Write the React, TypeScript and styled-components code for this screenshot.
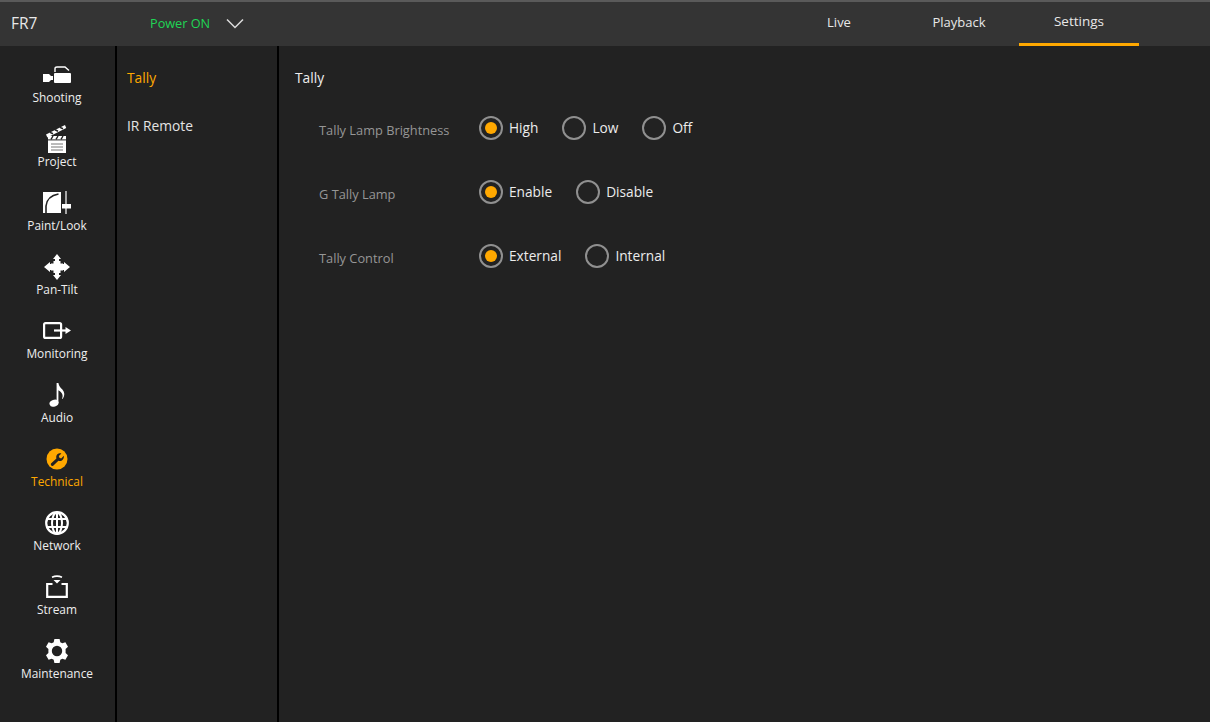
import React from 'react'
import styled, { createGlobalStyle } from 'styled-components'

const GlobalStyle = createGlobalStyle`
  html, body {
    margin: 0;
    padding: 0;
    height: 100%;
    background: #222222;
    font-family: "Open Sans", "Noto Sans", "Liberation Sans", sans-serif;
  }
  #root { height: 100%; }
  * { box-sizing: border-box; }
`

const ShootingIcon = () => (
  <svg width="28" height="17" viewBox="0 0 28 17" fill="#fff">
    <path d="M0 8h6l2 2h2v4H8l-2 2H0z" />
    <rect x="11" y="7" width="17" height="10" rx="1" />
    <path d="M12 6V2.500Q12 1 14 1h8l4 3.500" fill="none" stroke="#fff" strokeWidth="1.400" />
  </svg>
)

const ProjectIcon = () => (
  <svg width="24" height="30" viewBox="0 0 24 30" fill="#fff">
    <path d="M1 10.500 20 1l1.200 3L2.400 13.400z" />
    <path d="M5 8.400l3 1.400M10 5.800l3 1.400M15 3.400l3 1.400" stroke="#222" strokeWidth="1.600" />
    <rect x="3" y="12" width="18" height="3.400" />
    <path d="M3 16.400h18V29H3z" />
    <path d="M6 15.400l2-3.400M11 15.400l2-3.400M16 15.400l2-3.400" stroke="#222" strokeWidth="1.400" />
    <path d="M6 20h12M6 23h12M6 26h12" stroke="#777" strokeWidth="1" />
  </svg>
)

const PaintIcon = () => (
  <svg width="28" height="23" viewBox="0 0 28 23">
    <path d="M0 1h18v21H0z" fill="#fff" />
    <path d="M3 22V15Q4 5 15.500 3" fill="none" stroke="#222" strokeWidth="1.600" />
    <path d="M23 0v23" stroke="#fff" strokeWidth="1.200" />
    <rect x="19" y="13" width="9" height="4.500" fill="#fff" />
  </svg>
)

const PanTiltIcon = () => (
  <svg width="26" height="26" viewBox="0 0 26 26" fill="#fff">
    <path d="M13 0l4 5h-2v5h5V8l6 5-6 5v-2h-5v5h2l-4 5-4-5h2v-5H6v2l-6-5 6-5v2h5V5H9z" />
    <rect x="7" y="9.500" width="12" height="7" />
    <rect x="9.500" y="7" width="7" height="12" />
  </svg>
)

const MonitoringIcon = () => (
  <svg width="28" height="17" viewBox="0 0 28 17">
    <rect x="1.100" y="1.100" width="17" height="14.800" rx="1.500" fill="none" stroke="#fff" strokeWidth="2.200" />
    <path d="M11 8.500h12" stroke="#fff" strokeWidth="2.200" />
    <path d="M22.500 5 28 8.500 22.500 12z" fill="#fff" />
  </svg>
)

const AudioIcon = () => (
  <svg width="16" height="24" viewBox="0 0 16 24" fill="#fff">
    <ellipse cx="5" cy="20.200" rx="4.600" ry="3.400" transform="rotate(-18 5 20.200)" />
    <path d="M7.600 0h1.800c.4 3 2.200 4.600 4 6.600 2.400 2.800 2.600 5.800.4 9.200h-.8c1.200-3 .6-5-1.200-6.800-.8-.8-1.600-1.400-2.400-1.800V20H7.600z" />
  </svg>
)

const TechnicalIcon = () => (
  <svg width="22" height="22" viewBox="0 0 22 22">
    <circle cx="11" cy="11" r="10.500" fill="#ffa800" />
    <path d="M5 15.600 10.400 10.600c-.6-2 .2-4.200 2.200-5 1-.4 1.800-.4 2.800-.2L12.800 8l.6 1.800 1.800.6 2.600-2.600c.3 1.600-.2 3.400-1.600 4.400-1.200.9-2.600 1-3.800.6L7.200 17.800c-1.400.8-3-.8-2.200-2.200z" fill="#222" />
  </svg>
)

const NetworkIcon = () => (
  <svg width="24" height="24" viewBox="0 0 24 24" fill="none" stroke="#fff">
    <circle cx="12" cy="12" r="10.800" strokeWidth="2.200" />
    <ellipse cx="12" cy="12" rx="5" ry="10.600" strokeWidth="2" />
    <path d="M12 1v22M2 8h20M2 16h20" strokeWidth="2" />
  </svg>
)

const StreamIcon = () => (
  <svg width="22" height="23" viewBox="0 0 22 23" fill="none" stroke="#fff">
    <path d="M6.500 9H1.200v12.800h19.600V9h-5.300" strokeWidth="2.200" />
    <path d="M6 2.200Q11 0 16 2.200" strokeWidth="1.600" />
    <path d="M7.500 5h7L11 8.500z" fill="#fff" stroke="none" />
  </svg>
)

const MaintenanceIcon = () => (
  <svg width="24" height="24" viewBox="0 0 24 24" fill="#fff">
    <path fillRule="evenodd" d="M9.400 0h5.200l.7 3.200 2 1.100 3.100-1 2.600 4.500-2.400 2.200v4l2.400 2.200-2.600 4.500-3.100-1-2 1.100-.7 3.200H9.400l-.7-3.200-2-1.100-3.100 1L1 16.300l2.400-2.200v-4L1 7.800l2.600-4.500 3.100 1 2-1.100zM12 6.800a5.200 5.200 0 1 0 0 10.400 5.200 5.200 0 0 0 0-10.400z" />
  </svg>
)

const sideItems = [
  { label: 'Shooting', icon: <ShootingIcon /> },
  { label: 'Project', icon: <ProjectIcon /> },
  { label: 'Paint/Look', icon: <PaintIcon /> },
  { label: 'Pan-Tilt', icon: <PanTiltIcon /> },
  { label: 'Monitoring', icon: <MonitoringIcon /> },
  { label: 'Audio', icon: <AudioIcon /> },
  { label: 'Technical', icon: <TechnicalIcon />, active: true },
  { label: 'Network', icon: <NetworkIcon /> },
  { label: 'Stream', icon: <StreamIcon /> },
  { label: 'Maintenance', icon: <MaintenanceIcon /> },
]

const settings = [
  { label: 'Tally Lamp Brightness', options: ['High', 'Low', 'Off'] },
  { label: 'G Tally Lamp', options: ['Enable', 'Disable'] },
  { label: 'Tally Control', options: ['External', 'Internal'] },
]

export default function App() {
  return (
    <>
      <GlobalStyle />
      <Page>
        <Header>
          <Model>FR7</Model>
          <Power>
            <PowerText>Power ON</PowerText>
            <svg width="18" height="11" viewBox="0 0 18 11" fill="none" stroke="#ddd" strokeWidth="1.500">
              <path d="M1 1.500l8 8 8-8" />
            </svg>
          </Power>
          <Tabs>
            <Tab>Live</Tab>
            <Tab>Playback</Tab>
            <Tab $active>Settings</Tab>
          </Tabs>
        </Header>
        <Body>
          <Sidebar>
            {sideItems.map((item) => (
              <SideItem key={item.label} $active={item.active}>
                <SideIcon>{item.icon}</SideIcon>
                <SideLabel>{item.label}</SideLabel>
              </SideItem>
            ))}
          </Sidebar>
          <SubMenu>
            <SubItem $active>Tally</SubItem>
            <SubItem>IR Remote</SubItem>
          </SubMenu>
          <Content>
            <Title>Tally</Title>
            {settings.map((row) => (
              <Row key={row.label}>
                <RowLabel>{row.label}</RowLabel>
                <Options>
                  {row.options.map((opt, i) => (
                    <Option key={opt}>
                      <Radio $checked={i === 0} />
                      <OptionText>{opt}</OptionText>
                    </Option>
                  ))}
                </Options>
              </Row>
            ))}
          </Content>
        </Body>
      </Page>
    </>
  )
}

const Page = styled.div`
  width: 1210px;
  height: 722px;
  display: flex;
  flex-direction: column;
  overflow: hidden;
  background: #222222;
  color: #eeeeee;
`

const Header = styled.header`
  height: 46px;
  flex: none;
  display: flex;
  align-items: stretch;
  background: #343434;
  border-top: 2px solid #5a5a5a;
`

const Model = styled.div`
  width: 150px;
  padding: 11px 0 0 11px;
  font-size: 15.500px;
  line-height: 21px;
  color: #e8e8e8;
`

const Power = styled.div`
  display: flex;
  align-items: center;
  gap: 16px;
  padding-bottom: 1px;
`

const PowerText = styled.span`
  font-size: 12.700px;
  line-height: 17px;
  color: #1fd655;
  width: 60px;
  white-space: nowrap;
`

const Tabs = styled.nav`
  display: flex;
  margin-left: auto;
  margin-right: 71px;
`

const Tab = styled.div<{ $active?: boolean }>`
  width: 120px;
  padding-top: ${(p) => (p.$active ? '11px' : '12px')};
  text-align: center;
  font-size: ${(p) => (p.$active ? '13.500px' : '13px')};
  line-height: 17px;
  color: #e8e8e8;
  border-bottom: 3px solid ${(p) => (p.$active ? '#ffa800' : 'transparent')};
`

const Body = styled.div`
  flex: 1;
  display: flex;
  min-height: 0;
`

const Sidebar = styled.aside`
  width: 117px;
  flex: none;
  padding-right: 1px;
  border-right: 2px solid #000;
`

const SideItem = styled.div<{ $active?: boolean }>`
  height: 64px;
  display: flex;
  flex-direction: column;
  align-items: center;
  color: ${(p) => (p.$active ? '#ffa800' : '#eeeeee')};
`

const SideIcon = styled.div`
  height: 29px;
  margin-top: 14px;
  display: flex;
  align-items: center;
  justify-content: center;
`

const SideLabel = styled.div`
  font-size: 11.900px;
  line-height: 16px;
  white-space: nowrap;
`

const SubMenu = styled.div`
  width: 162px;
  flex: none;
  padding-top: 8px;
  border-right: 2px solid #000;
`

const SubItem = styled.div<{ $active?: boolean }>`
  height: 48px;
  padding: 15px 0 0 10px;
  font-size: 13.800px;
  line-height: 18px;
  color: ${(p) => (p.$active ? '#ffa800' : '#e4e4e4')};
`

const Content = styled.main`
  flex: 1;
  padding: 23px 0 0 16px;
`

const Title = styled.div`
  font-size: 13.800px;
  line-height: 18px;
  height: 27px;
  color: #eeeeee;
`

const Row = styled.div`
  height: 64px;
  display: flex;
  align-items: center;
  padding-left: 24px;
`

const RowLabel = styled.div`
  width: 160px;
  padding-top: 5px;
  font-size: 12.800px;
  line-height: 17px;
  color: #969696;
  white-space: nowrap;
`

const Options = styled.div`
  display: flex;
  gap: 24px;
`

const Option = styled.label`
  display: flex;
  align-items: center;
  gap: 6px;
`

const Radio = styled.span<{ $checked?: boolean }>`
  width: 24px;
  height: 24px;
  border-radius: 50%;
  border: 2px solid #909090;
  display: flex;
  align-items: center;
  justify-content: center;
  &::after {
    content: '';
    width: 12px;
    height: 12px;
    border-radius: 50%;
    background: ${(p) => (p.$checked ? '#ffa800' : 'transparent')};
  }
`

const OptionText = styled.span`
  font-size: 13.700px;
  line-height: 18px;
  color: #ececec;
`
